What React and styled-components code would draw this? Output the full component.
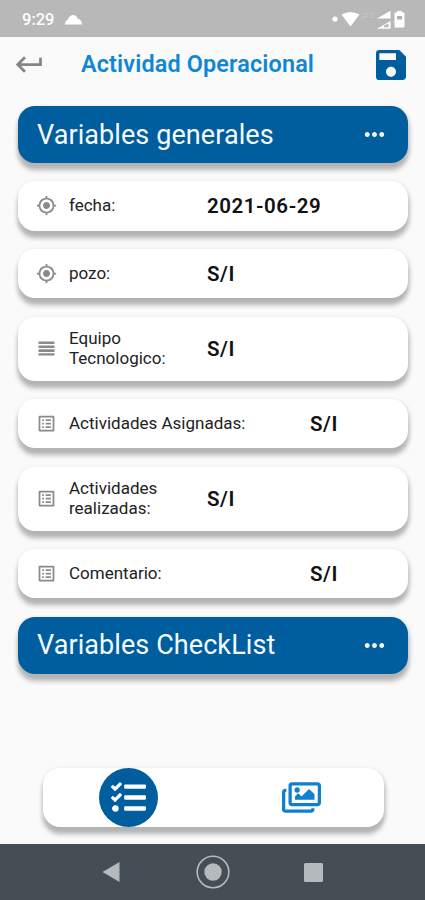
import React from "react";
import styled, { createGlobalStyle } from "styled-components";
import {
  MdKeyboardReturn,
  MdListAlt,
  MdMoreHoriz,
  MdMyLocation,
  MdSave,
} from "react-icons/md";
import { FaRegImages, FaTasks } from "react-icons/fa";

const GlobalStyle = createGlobalStyle`
  * {
    box-sizing: border-box;
  }
  body {
    margin: 0;
    background: #fafafa;
    font-family: Roboto, "Liberation Sans", sans-serif;
  }
  svg {
    display: block;
    flex-shrink: 0;
  }
`;

const Screen = styled.div`
  width: 425px;
  height: 900px;
  display: flex;
  flex-direction: column;
  overflow: hidden;
  background: #fafafa;
`;
const StatusBar = styled.div`
  height: 37px;
  padding: 2px 20px 0 22px;
  display: flex;
  align-items: center;
  background: #b8b8b8;
  color: #fff;
`;
const Clock = styled.span`
  width: 43px;
  font-size: 16.5px;
  font-weight: 500;
`;
const StatusIcons = styled.div`
  margin-left: auto;
`;
const AppBar = styled.header`
  height: 55px;
  padding: 0 14px 0 13px;
  display: flex;
  align-items: center;
  color: #858585;
`;
const Title = styled.h1`
  margin: 0 auto 0 35px;
  padding-top: 1px;
  color: #0f86d6;
  font-size: 23.4px;
  font-weight: 600;
  line-height: 1;
  letter-spacing: 0.15px;
  white-space: nowrap;
`;
const Content = styled.main`
  flex: 1;
  padding: 14px 17px 0 18px;
  display: flex;
  flex-direction: column;
  gap: 18.4px;
`;
const SectionHeader = styled.div`
  height: 57px;
  padding: 0 19px;
  display: flex;
  align-items: center;
  justify-content: space-between;
  border-radius: 17px;
  background: #005e9f;
  box-shadow: 0 7px 5px #b3b3b3, 1px 2px 5px #cfcfcf;
  color: #f5fbff;
  font-size: 27px;
  line-height: 1;
  letter-spacing: 0.08px;
`;
const SectionTitle = styled.span`
  padding-top: 1px;
`;
const Card = styled.div`
  height: ${(props) => (props.$tall ? "64.2px" : "49.2px")};
  padding-left: 18px;
  display: flex;
  align-items: center;
  border-radius: 17px;
  background: #fff;
  box-shadow: 0 7px 5px #b3b3b3, 1px 2px 5px #cfcfcf;
  color: #8a8a8a;
`;
const Label = styled.span`
  width: ${(props) => (props.$wide ? "253px" : "150px")};
  padding: 0 ${(props) => (props.$wide ? "0" : "46px")} 1.5px 12px;
  color: #222;
  font-size: 17px;
  line-height: 20px;
`;
const Value = styled.span`
  padding-top: 1px;
  color: #111;
  font-size: 20.5px;
  font-weight: 600;
  letter-spacing: 0.55px;
  white-space: nowrap;
`;
const TabBar = styled.nav`
  width: 341px;
  height: 59px;
  margin: 0 0 17px 42.5px;
  padding-left: 1px;
  display: grid;
  grid-template-columns: 170px 1fr;
  column-gap: 5px;
  place-items: center;
  border-radius: 17px;
  background: #fff;
  box-shadow: 0 7px 5px #b3b3b3, 1px 2px 5px #cfcfcf;
`;
const Tab = styled.div`
  width: 59px;
  height: 59px;
  display: grid;
  place-items: center;
  border-radius: 50%;
  background: ${(props) => (props.$active ? "#005e9f" : "transparent")};
  color: ${(props) => (props.$active ? "#fff" : "#0f7fd0")};
`;
const SystemNav = styled.div`
  height: 56px;
  padding: 0 102px;
  display: flex;
  align-items: center;
  justify-content: space-between;
  background: #454e55;
  color: #b4babd;
`;

const BarsIcon = ({ size }) => (
  <svg width={size} height={size} viewBox="0 0 21 21" fill="currentColor">
    <path d="M2.500 3.500h16v2.600h-16ZM2.500 7.400h16v2.600h-16ZM2.500 11.300h16v2.600h-16ZM2.500 15.200h16v2.300h-16Z" />
  </svg>
);

const fields = [
  { label: "fecha:", value: "2021-06-29", icon: MdMyLocation },
  { label: "pozo:", value: "S/I", icon: MdMyLocation },
  { label: "Equipo Tecnologico:", value: "S/I", icon: BarsIcon, tall: true },
  { label: "Actividades Asignadas:", value: "S/I", icon: MdListAlt, wide: true },
  { label: "Actividades realizadas:", value: "S/I", icon: MdListAlt, tall: true },
  { label: "Comentario:", value: "S/I", icon: MdListAlt, wide: true },
];

const Section = ({ title }) => (
  <SectionHeader>
    <SectionTitle>{title}</SectionTitle>
    <MdMoreHoriz size={29} />
  </SectionHeader>
);

const Field = ({ label, value, icon: Icon, tall, wide }) => (
  <Card $tall={tall}>
    <Icon size={21} />
    <Label $wide={wide}>{label}</Label>
    <Value>{value}</Value>
  </Card>
);

export default function App() {
  return (
    <>
      <GlobalStyle />
      <Screen>
        <StatusBar>
          <Clock>9:29</Clock>
          <svg width="17" height="11" viewBox="0 0 17 11" fill="currentColor">
            <path d="M0 10.500C0 8 1.200 6.200 3 5.500 4 2.500 5.800 1 8 1c2.300 0 3.900 1.400 4.600 3.600C15.200 5.200 17 7.500 17 10.500Z" />
          </svg>
          <StatusIcons>
            <svg width="74" height="20" viewBox="0 0 74 20" fill="currentColor">
              <circle cx="4" cy="9" r="2.600" />
              <path d="M10.500 4.500Q19.500-.5 28.500 4.500L19.500 16.500Z" />
              <path
                d="M32 3.500h4v3h-4v3M38 3.500h4M38 7.500h4v-3"
                fill="none"
                stroke="#c5c5c5"
                strokeWidth="1"
              />
              <path d="M46 8.500 59.500 .8V8.500Z" />
              <path d="M46 18.700 59.500 11V18.700Z" />
              <path d="M53 17.300V15.500L57.500 13.500V17.300Z" fill="#b8b8b8" />
              <path d="M66 1h5v1.500h1.500q1 0 1 1V16.500q0 1-1 1h-8q-1 0-1-1V3.500q0-1 1-1H66Z" />
              <path d="M66 6h5v3.500h-5Z" fill="#b0b0b0" />
            </svg>
          </StatusIcons>
        </StatusBar>
        <AppBar>
          <MdKeyboardReturn size={33} />
          <Title>Actividad Operacional</Title>
          <MdSave size={40} color="#005e9f" />
        </AppBar>
        <Content>
          <Section title="Variables generales" />
          {fields.map((field) => (
            <Field key={field.label} {...field} />
          ))}
          <Section title="Variables CheckList" />
        </Content>
        <TabBar>
          <Tab $active>
            <FaTasks size={35} />
          </Tab>
          <Tab>
            <FaRegImages size={39} />
          </Tab>
        </TabBar>
        <SystemNav>
          <svg width="18" height="20" viewBox="0 0 18 20" fill="currentColor">
            <path d="M.5 10 17.500 0V20Z" />
          </svg>
          <svg width="36" height="34" viewBox="0 0 36 34" fill="currentColor">
            <circle
              cx="19"
              cy="17"
              r="15.800"
              fill="none"
              stroke="currentColor"
              strokeWidth="1.600"
            />
            <circle cx="19" cy="17" r="8.700" />
          </svg>
          <svg width="19" height="19" viewBox="0 0 19 19" fill="currentColor">
            <rect width="19" height="19" rx="1.500" />
          </svg>
        </SystemNav>
      </Screen>
    </>
  );
}
